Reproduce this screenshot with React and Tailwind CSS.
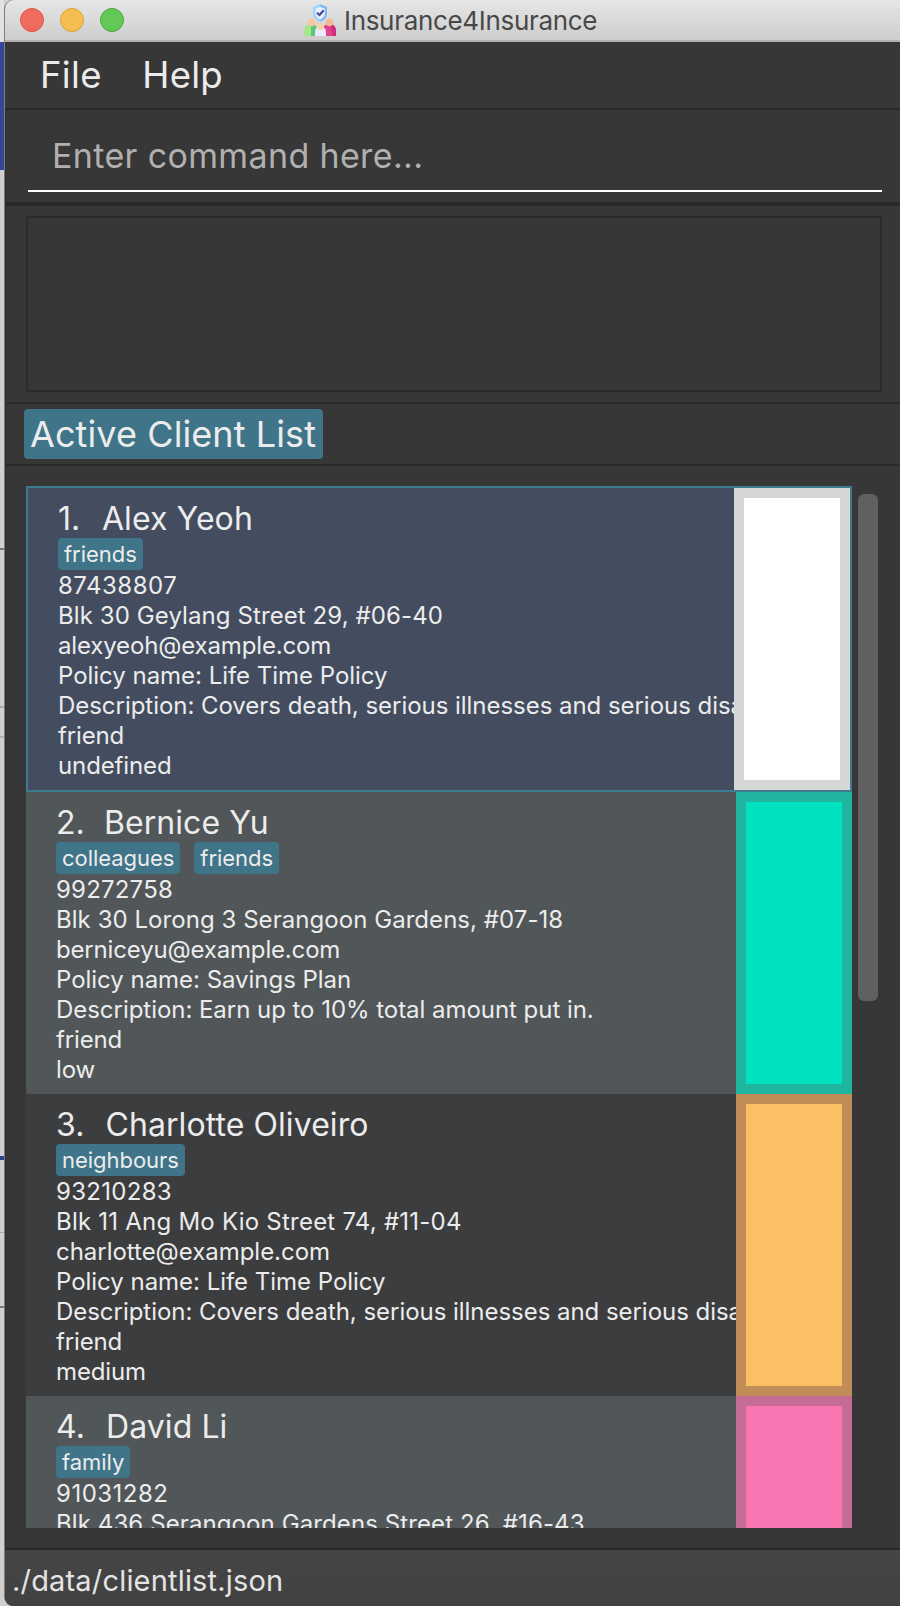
import React from "react";

const clients = [
  {
    id: "1.", name: "Alex Yeoh", tags: ["friends"], gap: "gap-[21.500px]",
    lines: ["87438807", "Blk 30 Geylang Street 29, #06-40", "alexyeoh@example.com", "Policy name: Life Time Policy", "Description: Covers death, serious illnesses and serious disabilities.", "friend", "undefined"],
    card: "bg-[#434d5f] border-2 border-[#3e7b91] h-[306px]",
    swatch: "bg-white border-[#d5d7d6]",
    tracking: ["tracking-[0.5px]", "tracking-[0.09px]", "tracking-[-0.15px]"],
  },
  {
    id: "2.", name: "Bernice Yu", tags: ["colleagues", "friends"], gap: "gap-[19px]",
    lines: ["99272758", "Blk 30 Lorong 3 Serangoon Gardens, #07-18", "berniceyu@example.com", "Policy name: Savings Plan", "Description: Earn up to 10% total amount put in.", "friend", "low"],
    card: "bg-[#515658] h-[302px]",
    swatch: "bg-[#00e1bf] border-[#20b59f]",
    tracking: ["tracking-[0.2px]", "tracking-[0.05px]", "tracking-[-0.17px]"],
  },
  {
    id: "3.", name: "Charlotte Oliveiro", tags: ["neighbours"], gap: "gap-[21px]",
    lines: ["93210283", "Blk 11 Ang Mo Kio Street 74, #11-04", "charlotte@example.com", "Policy name: Life Time Policy", "Description: Covers death, serious illnesses and serious disabilities.", "friend", "medium"],
    card: "bg-[#3c3d3f] h-[302px]",
    swatch: "bg-[#fdbf63] border-[#c08d56]",
    tracking: ["tracking-[0.3px]", "tracking-[0.23px]", "tracking-[-0.03px]"],
  },
  {
    id: "4.", name: "David Li", tags: ["family"], gap: "gap-[21px]",
    lines: ["91031282", "Blk 436 Serangoon Gardens Street 26, #16-43", "lidavid@example.com", "Policy name: Savings Plan", "Description: Earn up to 10% total amount put in.", "friend", "high"],
    card: "bg-[#515658] h-[302px]",
    swatch: "bg-[#f775b0] border-[#c46c95]",
    tracking: ["tracking-[0.5px]", "tracking-[0.1px]", "tracking-[-0.15px]"],
  },
];

// Letter spacing of the policy, description, relation and risk lines.
const detailTracking = [
  "tracking-[-0.03px]",
  "tracking-[-0.04px]",
  "tracking-[-0.15px]",
  "tracking-[-0.12px]",
];

function AppIcon() {
  return (
    <svg className="h-8 w-8 shrink-0" viewBox="0 0 32 32">
      <path d="M0 32v-5q0-7 7-7 6 0 6 6v6z" fill="#a5e58c" />
      <path d="M7 20q6 0 6 6v6H7z" fill="#5cc77c" />
      <path d="M19 32v-6q0-6 6-6 7 0 7 7v5z" fill="#e2418f" />
      <path d="M26 20q6 1 6 7v5h-3z" fill="#cf2e7c" />
      <circle cx="7.500" cy="18.500" r="3.700" fill="#f7c8a0" />
      <circle cx="25.500" cy="18.500" r="3.700" fill="#f2b98e" />
      <path d="M11 32v-4q0-5 5.500-5t5.500 5v4z" fill="#eceafb" />
      <circle cx="16.500" cy="22.500" r="3.600" fill="#fad0ab" />
      <path d="M16.300.3 23 3v6q0 6-6.700 9Q9.500 15 9.500 9V3z" fill="#7fb3f7" />
      <path d="M16.300.3V18Q9.500 15 9.500 9V3z" fill="#a3d4fb" />
      <path d="M16.300 2.800 21 4.700V9q0 4.200-4.700 6.500Q11.500 13.200 11.500 9V4.700z" fill="#e6f0ff" />
      <path d="m13 8.700 2.500 2.300 4.300-4.700" fill="none" stroke="#4a4890" strokeWidth="2.200" />
    </svg>
  );
}

function ClientCard({ client }) {
  const tracking = [...client.tracking, ...detailTracking];
  return (
    <article className={`flex shrink-0 overflow-hidden ${client.card}`}>
      <div className="min-w-0 flex-1 overflow-hidden whitespace-nowrap pt-3 pl-[30px]">
        <h2 className={`flex h-[38px] items-center text-[32px] leading-[38px] tracking-[0.08px] ${client.gap}`}>
          <span>{client.id}</span>
          <span>{client.name}</span>
        </h2>
        <div className="mb-px flex h-8 gap-[14px]">
          {client.tags.map((t) => (
            <span key={t} className="h-8 rounded-[4px] bg-[#3f7489] px-1.5 text-[22px] leading-8 tracking-[-0.04px]">{t}</span>
          ))}
        </div>
        {client.lines.map((l, i) => (
          <p key={l} className={`h-[30px] text-[24px] leading-[30px] ${tracking[i]}`}>{l}</p>
        ))}
      </div>
      <div className={`w-[116px] shrink-0 border-[10px] ${client.swatch}`} />
    </article>
  );
}

function Backdrop() {
  return (
    <div className="flex w-1 shrink-0 flex-col bg-[#cfcfcf]">
      <div className="h-[42px] bg-[#e2e2e2]" />
      <div className="h-32 bg-[#35459a]" />
      <div className="h-[378px]" />
      <div className="h-0.5 bg-[#777777]" />
      <div className="h-[156px]" />
      <div className="h-0.5 bg-[#a9a9a9]" />
      <div className="h-7" />
      <div className="h-0.5 bg-[#b0b0b0]" />
      <div className="h-[418px]" />
      <div className="h-1 bg-[#2f3f92]" />
      <div className="h-[72px]" />
      <div className="h-px bg-[#a9a9a9]" />
      <div className="h-[73px]" />
      <div className="h-0.5 bg-[#7b7b7b]" />
    </div>
  );
}

export default function App() {
  return (
    <div className="flex h-[1606px] w-[900px] overflow-hidden bg-[#cfcfcf] font-['Inter',sans-serif] text-[#ececec]">
      <Backdrop />
      <div className="flex min-w-0 flex-1 flex-col overflow-hidden rounded-l-[9px] border-l border-[#7e7e7e] bg-[#373737]">
        <header className="flex h-[42px] shrink-0 items-start border-b-2 border-[#b2b2b2] bg-linear-to-b from-[#e6e6e6] to-[#cdcdcd]">
          <div className="flex w-[299px] gap-4 pt-2 pl-[15px]">
            <span className="size-6 rounded-full border border-[#d9534a] bg-[#ee6b60]" />
            <span className="size-6 rounded-full border border-[#dba03c] bg-[#f6be50]" />
            <span className="size-6 rounded-full border border-[#4da641] bg-[#63c956]" />
          </div>
          <div className="flex gap-2 pt-1">
            <AppIcon />
            <h1 className="pt-px text-[26px] leading-8 tracking-[-0.32px] text-[#484848]">Insurance4Insurance</h1>
          </div>
        </header>
        <nav className="flex h-[66px] shrink-0 items-center gap-[40.500px] pl-[35px] text-[36.500px] leading-[66px] tracking-[0.3px]">
          <span>File</span>
          <span>Help</span>
        </nav>
        <main className="flex min-h-0 flex-1 flex-col border-l border-[#2b2b2b]">
          <section className="h-[98px] shrink-0 border-y-2 border-b-4 border-[#292929] pr-[18px] pl-[22px]">
            <div className="h-[82px] border-b-2 border-white pl-6 text-[34px] leading-[92px] tracking-[0.36px] text-[#b0b0b0]">Enter command here...</div>
          </section>
          <section className="h-[196px] shrink-0 pt-2.5 pr-[18px] pl-5">
            <div className="h-[176px] border-2 border-[#2b2b2b]" />
          </section>
          <section className="flex h-16 shrink-0 border-y-2 border-[#2b2b2b] pt-[5px] pl-[18px]">
            <h2 className="h-[50px] w-[299px] rounded-[4px] bg-[#3f7489] pl-1.5 text-[36px] leading-[50px] tracking-[0.1px] whitespace-nowrap">Active Client List</h2>
          </section>
          <section className="flex min-h-0 flex-1 border-b-2 border-[#292929] pt-5 pb-5 pl-5">
            <div className="flex w-[826px] shrink-0 flex-col overflow-hidden">
              {clients.map((c) => <ClientCard key={c.id} client={c} />)}
            </div>
            <div className="mt-2 ml-1.5 h-[507px] w-5 rounded-[6px] bg-[#606060]" />
          </section>
        </main>
        <footer className="h-14 shrink-0 bg-linear-to-b from-[#454545] to-[#414141] pl-[7px] text-[29px] leading-[62px] tracking-[0.18px] text-[#e4e4e4]">./data/clientlist.json</footer>
      </div>
    </div>
  );
}
